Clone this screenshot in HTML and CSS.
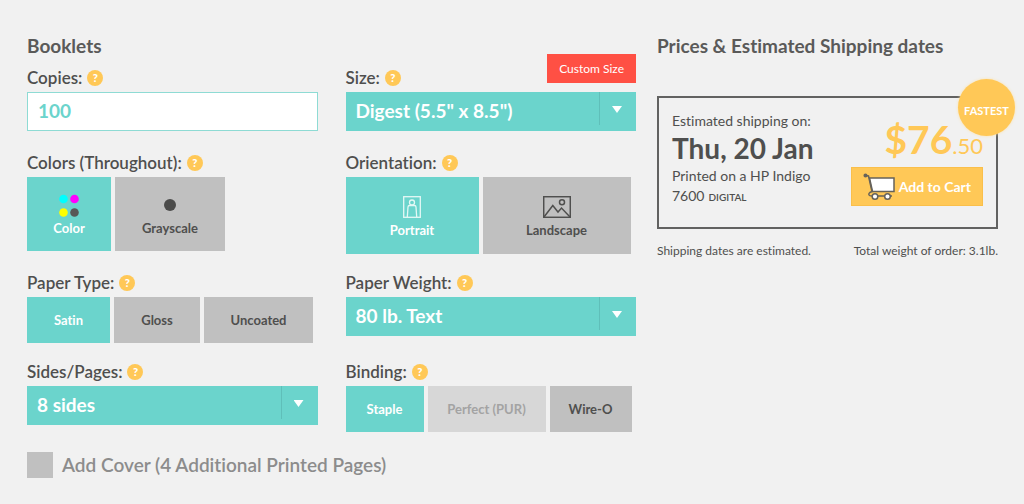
FILE: index.html
```html
<!DOCTYPE html>
<html lang="en">
<head>
<meta charset="utf-8">
<meta name="viewport" content="width=device-width, initial-scale=1">
<title>Booklets</title>
<link rel="stylesheet" href="styles.css">
</head>
<body>
<main class="page">
  <form class="options">
    <h2 class="heading">Booklets</h2>
    <div class="fields">
      <div class="field">
        <div class="field-head"><label class="field-label" for="copies">Copies:</label><button type="button" class="help">?</button></div>
        <input class="entry" id="copies" type="text" value="100">
      </div>
      <div class="field">
        <div class="field-head"><label class="field-label" for="size">Size:</label><button type="button" class="help">?</button></div>
        <button type="button" class="custom-size">Custom Size</button>
        <div class="dropdown"><select class="entry select" id="size"><option>Digest (5.5" x 8.5")</option></select></div>
      </div>

      <div class="field" role="radiogroup" aria-labelledby="colors">
        <div class="field-head"><span class="field-label" id="colors">Colors (Throughout):</span><button type="button" class="help">?</button></div>
        <div class="choices">
          <label class="choice picture color"><input type="radio" name="colors" checked>
            <svg width="22" height="24" viewBox="0 0 22 24"><circle cx="5.500" cy="6" r="4.300" fill="#0ff"/><circle cx="16.500" cy="6" r="4.300" fill="#f0f"/><circle cx="5.500" cy="19.500" r="4.300" fill="#ff0"/><circle cx="16.500" cy="19.500" r="4.300" fill="#575756"/></svg>
            <span>Color</span></label>
          <label class="choice picture gray"><input type="radio" name="colors">
            <svg width="22" height="24" viewBox="0 0 22 24"><circle cx="11" cy="12" r="6" fill="#4b4b4a"/></svg>
            <span>Grayscale</span></label>
        </div>
      </div>
      <div class="field" role="radiogroup" aria-labelledby="orientation">
        <div class="field-head"><span class="field-label" id="orientation">Orientation:</span><button type="button" class="help">?</button></div>
        <div class="choices">
          <label class="choice picture tall portrait"><input type="radio" name="orientation" checked>
            <svg width="18" height="22" viewBox="0 0 18 22" fill="none" stroke="#e4f8f5" stroke-width="1.300"><rect x=".7" y=".7" width="16.600" height="20.600"/><circle cx="9" cy="6.500" r="2.500"/><path d="M4.300 21 5 11q.1-1.500 1.500-1.500h5q1.400 0 1.500 1.500l.7 10"/></svg>
            <span>Portrait</span></label>
          <label class="choice picture tall landscape"><input type="radio" name="orientation">
            <svg width="28" height="22" viewBox="0 0 28 22" fill="none" stroke="#4f4f4e" stroke-width="1.500"><rect x=".7" y=".7" width="26.600" height="20.600"/><circle cx="19" cy="6.200" r="2.500"/><path d="m1 21 8.800-11.500L15 16l3.500-4L27 21"/></svg>
            <span>Landscape</span></label>
        </div>
      </div>

      <div class="field" role="radiogroup" aria-labelledby="paper">
        <div class="field-head"><span class="field-label" id="paper">Paper Type:</span><button type="button" class="help">?</button></div>
        <div class="choices">
          <label class="choice satin"><input type="radio" name="paper" checked><span>Satin</span></label>
          <label class="choice gloss"><input type="radio" name="paper"><span>Gloss</span></label>
          <label class="choice uncoated"><input type="radio" name="paper"><span>Uncoated</span></label>
        </div>
      </div>
      <div class="field">
        <div class="field-head"><label class="field-label" for="weight">Paper Weight:</label><button type="button" class="help">?</button></div>
        <div class="dropdown"><select class="entry select" id="weight"><option>80 lb. Text</option></select></div>
      </div>

      <div class="field">
        <div class="field-head"><label class="field-label" for="sides">Sides/Pages:</label><button type="button" class="help">?</button></div>
        <div class="dropdown"><select class="entry select" id="sides"><option>8 sides</option></select></div>
      </div>
      <div class="field" role="radiogroup" aria-labelledby="binding">
        <div class="field-head"><span class="field-label" id="binding">Binding:</span><button type="button" class="help">?</button></div>
        <div class="choices">
          <label class="choice staple"><input type="radio" name="binding" checked><span>Staple</span></label>
          <label class="choice perfect"><input type="radio" name="binding" disabled><span>Perfect (PUR)</span></label>
          <label class="choice wire"><input type="radio" name="binding"><span>Wire-O</span></label>
        </div>
      </div>
    </div>
    <label class="cover"><input type="checkbox" class="cover-box"><span>Add Cover (4 Additional Printed Pages)</span></label>
  </form>

  <section class="prices">
    <h2 class="heading">Prices &amp; Estimated Shipping dates</h2>
    <article class="offer">
      <div class="ship">
        <p class="small">Estimated shipping on:</p>
        <p class="date">Thu, 20 Jan</p>
        <p class="small">Printed on a HP Indigo</p>
        <p class="small model">7600 <span class="digital">DIGITAL</span></p>
      </div>
      <div class="buy">
        <p class="price">$76<span class="cents">.50</span></p>
        <button type="button" class="cart">
          <svg width="34" height="28" viewBox="0 0 34 28" fill="none" stroke="#66625a" stroke-width="1.500"><path d="M6.500 5H31v13.500H9.500z" fill="#fff"/><path d="M2.500 2.500 5.500 3 9 18.500q-4 1.500-3 3.500.5 1 3 1H29"/><circle cx="2.500" cy="2.500" r="1.300" fill="#66625a"/><circle cx="12" cy="23.500" r="2.800" fill="#fff"/><circle cx="24.500" cy="23.500" r="2.800" fill="#fff"/></svg>
          <span>Add to Cart</span>
        </button>
      </div>
      <span class="fastest">FASTEST</span>
    </article>
    <div class="notes"><span>Shipping dates are estimated.</span><span>Total weight of order: 3.1lb.</span></div>
  </section>
</main>
</body>
</html>
```
FILE: styles.css
```css
* { box-sizing: border-box; }
body {
  margin: 0;
  background: #f1f1f1;
  color: #4f4f4e;
  font-family: Lato, "Open Sans", sans-serif;
  font-variant-ligatures: none;
}
button, input, select { font: inherit; }
p, h2 { margin: 0; }
.page {
  display: grid;
  grid-template-columns: 609fr 341fr;
  column-gap: 21px;
  padding: 32px 26px 26px 27px;
}
.heading {
  height: 34px;
  font-size: 19px;
  font-weight: 700;
  line-height: 28px;
  white-space: nowrap;
  color: #5a5a59;
}
.fields {
  display: grid;
  grid-template-columns: 1fr 1fr;
  gap: 17px 28px;
}
.field { position: relative; min-width: 0; }
.field-head {
  display: flex;
  align-items: center;
  gap: 5px;
  height: 26px;
  padding-bottom: 2px;
}
.field-label { font-size: 17px; font-weight: 600; line-height: 24px; }
.help {
  width: 16px;
  height: 16px;
  padding: 0;
  border: 0;
  border-radius: 50%;
  background: #ffc857;
  color: #fff;
  font-size: 11px;
  font-weight: 900;
  line-height: 16px;
}
.entry {
  display: block;
  width: 100%;
  height: 39px;
  margin: 0 0 3px;
  padding: 0 10px 2px;
  border: 1px solid #8edbd4;
  border-radius: 0;
  background: #fff;
  color: #6bd4cc;
  font-size: 19px;
  font-weight: 700;
}
.select {
  appearance: none;
  padding: 0 42px 2px 10px;
  border: 0;
  background: #6bd4cc;
  color: #fff;
}
.dropdown { position: relative; }
.dropdown::before {
  content: "";
  position: absolute;
  top: 0;
  right: 36px;
  width: 1px;
  height: 33px;
  background: #5fbfb9;
  pointer-events: none;
}
.dropdown::after {
  content: "";
  position: absolute;
  top: 14px;
  right: 14px;
  width: 10px;
  height: 7px;
  background: #fff;
  clip-path: polygon(0 0, 100% 0, 50% 100%);
  pointer-events: none;
}
.custom-size {
  position: absolute;
  top: -12px;
  right: 0;
  height: 29px;
  padding: 0 12px;
  border: 0;
  background: #ff5044;
  color: #fff;
  font-size: 12px;
}
.choices { display: flex; align-items: flex-start; gap: 4px; }
.choice {
  display: flex;
  flex-direction: column;
  align-items: center;
  justify-content: center;
  gap: 3px;
  height: 46px;
  background: #c0c0c0;
  font-size: 13px;
  font-weight: 700;
  line-height: 16px;
  white-space: nowrap;
}
.choice input { position: absolute; opacity: 0; }
.choice:has(input:checked) { background: #6bd4cc; color: #fff; }
.choice:has(input:disabled) { background: #d7d7d7; color: #a3a3a3; }
.picture { height: 74px; }
.tall { height: 77px; gap: 4px; padding-top: 2px; }
.color { flex: 0 1 84px; }
.gray { flex: 0 1 110px; }
.portrait { flex: 0 1 133px; }
.landscape { flex: 0 1 148px; }
.satin { flex: 0 1 83px; }
.gloss { flex: 0 1 86px; }
.uncoated { flex: 0 1 109px; }
.staple { flex: 0 1 78px; }
.perfect { flex: 0 1 118px; }
.wire { flex: 0 1 82px; }
.cover {
  display: flex;
  align-items: center;
  gap: 9px;
  margin-top: 20px;
  color: #8c8c8c;
  font-size: 19px;
  font-weight: 600;
  line-height: 24px;
}
.cover-box {
  appearance: none;
  width: 26px;
  height: 26px;
  margin: 0;
  background: #c0c0c0;
}
.offer {
  position: relative;
  display: flex;
  justify-content: space-between;
  height: 133px;
  margin-top: 30px;
  padding: 13px 13px 0;
  border: 2px solid #626261;
}
.ship { flex: 0 1 150px; }
.small { font-size: 14px; line-height: 20px; }
.date { font-size: 28px; font-weight: 700; line-height: 35px; white-space: nowrap; }
.model { display: flex; align-items: baseline; gap: 4px; }
.digital { font-size: 10px; font-weight: 600; line-height: 12px; }
.buy { display: flex; flex-direction: column; align-items: flex-end; }
.price {
  height: 56px;
  padding-top: 4px;
  color: #ffc857;
  font-size: 39px;
  font-weight: 700;
  line-height: 48px;
}
.cents { font-size: 22px; font-weight: 400; }
.cart {
  display: flex;
  align-items: center;
  gap: 2px;
  height: 39px;
  padding: 0 11px;
  border: 1px solid #fabf4a;
  background: #ffc857;
  color: #fff;
  font-size: 14px;
  font-weight: 700;
  white-space: nowrap;
}
.fastest {
  position: absolute;
  top: -19px;
  right: -19px;
  width: 57px;
  height: 57px;
  padding-top: 4px;
  border-radius: 50%;
  background: #ffc857;
  box-shadow: 0 0 3px #ffe2a6;
  color: #fff;
  font-size: 11px;
  font-weight: 700;
  line-height: 56px;
  text-align: center;
}
.notes {
  display: flex;
  justify-content: space-between;
  margin-top: 13px;
  font-size: 12px;
  line-height: 18px;
  white-space: nowrap;
}
```
